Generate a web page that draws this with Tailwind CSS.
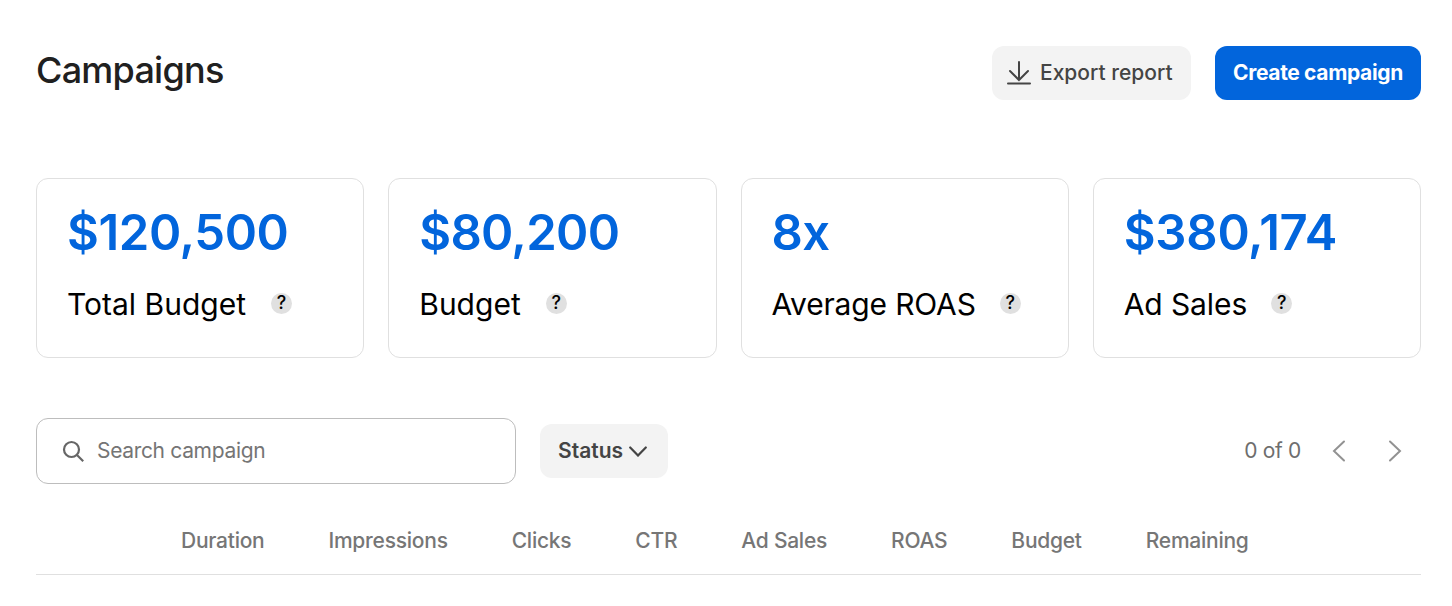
<!DOCTYPE html>
<html lang="en"><head><meta charset="utf-8"><title>Campaigns</title>
<script src="https://cdn.jsdelivr.net/npm/@tailwindcss/browser@4"></script></head>
<body class="bg-white font-['Inter',sans-serif] text-black">
<main class="h-[606px] overflow-hidden pl-9 pr-[31px] pt-[46px]">
<header class="flex h-[54px] items-start justify-between">
<h1 class="text-[36px] leading-[48px] font-[550] tracking-[-0.75px] text-[#202020]">Campaigns</h1>
<div class="flex gap-6">
<button class="flex h-[54px] w-[199px] items-center rounded-xl bg-[#f3f3f3] pl-[15px] text-[21px] font-[550] whitespace-nowrap text-[#444]"><svg class="mr-[9px] h-6 w-6 shrink-0" viewBox="0 0 24 24" fill="none" stroke="currentColor" stroke-width="2" stroke-linecap="round"><path d="M12 1v18M3 10l9 9 9-9M1 22.500h22"/></svg>Export report</button>
<button class="h-[54px] w-[206px] rounded-xl bg-[#0265dc] text-[21px] font-bold tracking-[-0.35px] whitespace-nowrap text-white">Create campaign</button>
</div></header>
<section class="mt-[78px] grid h-[180px] grid-cols-4 gap-6">
<div class="rounded-xl border border-[#e0e0e0] pt-[22px] pl-[30px]"><div class="text-[49px] leading-[63px] font-semibold tracking-[-0.4px] text-[#0265dc]">$120,500</div><div class="mt-[18px] flex items-center text-[30px] leading-[44px]"><span>Total Budget</span><span class="mb-0.5 ml-[25px] flex size-[21px] items-center justify-center rounded-full bg-[#e0e0e0] text-[18px] font-medium">?</span></div></div>
<div class="rounded-xl border border-[#e0e0e0] pt-[22px] pl-[30px]"><div class="text-[49px] leading-[63px] font-semibold tracking-[-0.7px] text-[#0265dc]">$80,200</div><div class="mt-[18px] flex items-center text-[30px] leading-[44px]"><span>Budget</span><span class="mb-0.5 ml-[25px] flex size-[21px] items-center justify-center rounded-full bg-[#e0e0e0] text-[18px] font-medium">?</span></div></div>
<div class="rounded-xl border border-[#e0e0e0] pt-[22px] pl-[30px]"><div class="text-[49px] leading-[63px] font-semibold tracking-[-0.7px] text-[#0265dc]">8x</div><div class="mt-[18px] flex items-center text-[30px] leading-[44px]"><span class="tracking-[-0.15px]">Average ROAS</span><span class="mb-0.5 ml-6 flex size-[21px] items-center justify-center rounded-full bg-[#e0e0e0] text-[18px] font-medium">?</span></div></div>
<div class="rounded-xl border border-[#e0e0e0] pt-[22px] pl-[30px]"><div class="text-[49px] leading-[63px] font-semibold tracking-[-0.25px] text-[#0265dc]">$380,174</div><div class="mt-[18px] flex items-center text-[30px] leading-[44px]"><span class="tracking-[-0.1px]">Ad Sales</span><span class="mb-0.5 ml-6 flex size-[21px] items-center justify-center rounded-full bg-[#e0e0e0] text-[18px] font-medium">?</span></div></div>
</section>
<section class="mt-[60px] flex h-[66px] items-center">
<label class="flex h-[66px] w-[480px] items-center rounded-xl border border-[#bdbdbd] pl-[25px] text-[21px] tracking-[-0.33px] text-[#757575]"><svg class="mr-3 size-[23px]" viewBox="0 0 23 23" fill="none" stroke="#666" stroke-width="2.200"><circle cx="9.5" cy="9.5" r="7.500"/><path d="m15 15 6.200 6.200"/></svg><span>Search campaign</span></label>
<button class="ml-6 flex h-[54px] w-32 items-center rounded-xl bg-[#f3f3f3] pl-[18px] text-[21px] font-semibold text-[#444]">Status<svg class="ml-[6px] h-3 w-[18px]" viewBox="0 0 18 12" fill="none" stroke="currentColor" stroke-width="2.200" stroke-linecap="round"><path d="m1.200 2.500 7.800 8 7.800-8"/></svg></button>
<div class="mr-[19px] ml-auto flex items-center text-[21px] text-[#6e6e6e]"><span class="tracking-[-0.33px]">0 of 0</span><svg class="ml-[31px] h-[22px] w-[14px]" viewBox="0 0 14 22" fill="none" stroke="#929292" stroke-width="2" stroke-linecap="round"><path d="M12 1.500 2 11l10 9.500"/></svg><svg class="ml-[42px] h-[22px] w-[14px]" viewBox="0 0 14 22" fill="none" stroke="#929292" stroke-width="2" stroke-linecap="round"><path d="M2 1.500 12 11 2 20.500"/></svg></div>
</section>
<div class="mt-[22px] flex h-[69px] items-center gap-16 border-b border-[#e0e0e0] pt-0.5 pl-[145px] text-[21px] font-medium tracking-[-0.25px] whitespace-nowrap text-[#767676]"><span>Duration</span><span>Impressions</span><span>Clicks</span><span>CTR</span><span>Ad Sales</span><span>ROAS</span><span>Budget</span><span>Remaining</span></div>
</main></body></html>
